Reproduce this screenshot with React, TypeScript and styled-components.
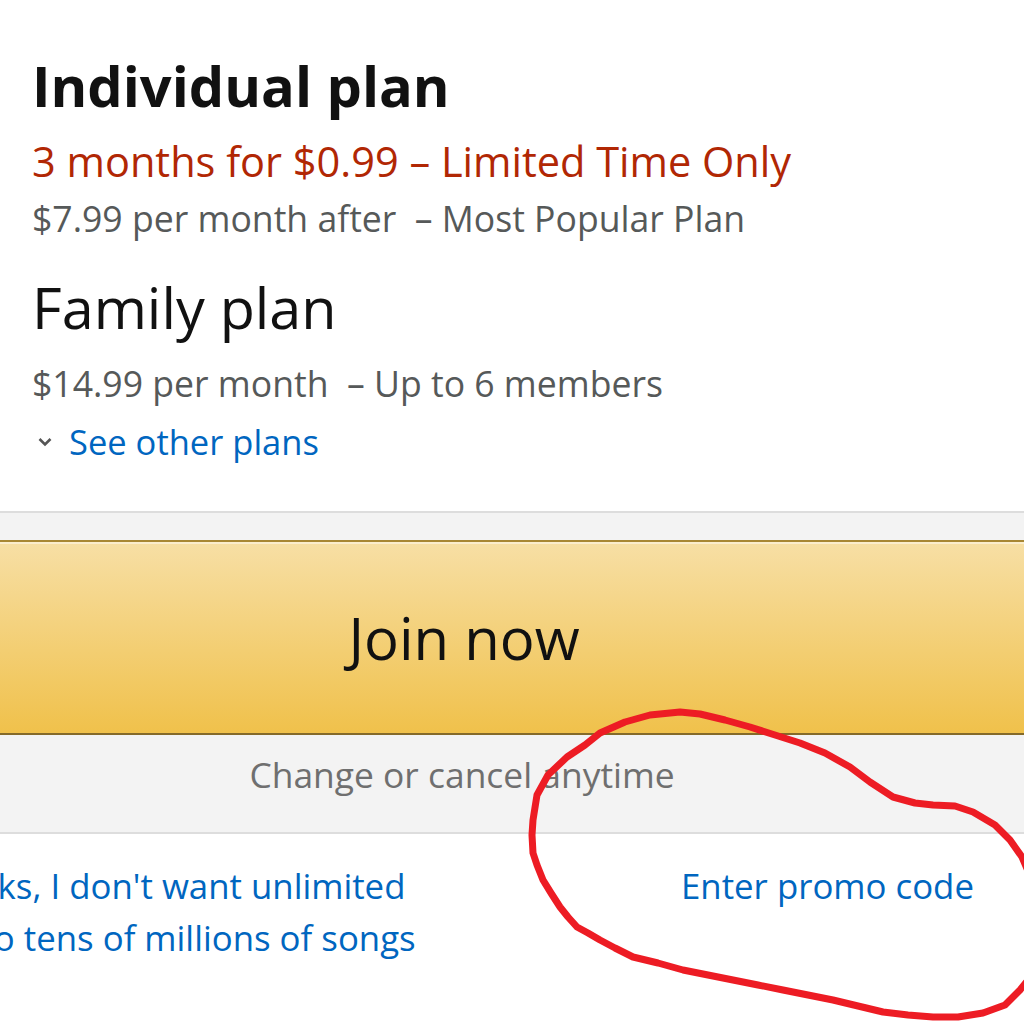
import React from "react";
import styled, { createGlobalStyle } from "styled-components";

const GlobalStyle = createGlobalStyle`
  html, body {
    margin: 0;
    padding: 0;
    background: #fff;
    overflow: hidden;
  }
  body {
    font-family: "Open Sans", "Noto Sans", Arial, sans-serif;
    color: #111;
  }
`;

// freehand loop drawn around the promo link
const loopPoints: [number, number][] = [
  [533, 820], [537, 795], [548, 775], [567, 757], [585, 745], [600, 733],
  [625, 722], [650, 715], [680, 712], [700, 714], [725, 720], [750, 727],
  [775, 735], [800, 743], [825, 753], [850, 767], [870, 782], [893, 797],
  [915, 803], [933, 805], [955, 806], [973, 812], [995, 825], [1010, 840],
  [1022, 857], [1032, 880], [1040, 930], [1032, 975], [1020, 990],
  [1005, 1005], [983, 1013], [958, 1017], [933, 1017], [908, 1015],
  [883, 1012], [858, 1006], [833, 1000], [808, 995], [783, 990], [758, 985],
  [733, 980], [708, 975], [683, 970], [658, 963], [633, 957], [615, 948],
  [600, 940], [588, 933], [577, 927], [568, 917], [560, 907], [551, 893],
  [543, 880], [537, 865], [533, 853], [532, 835], [533, 820],
];

const Page = styled.div`
  position: relative;
  width: 1024px;
  height: 1024px;
  overflow: hidden;
`;

const Plans = styled.section`
  padding: 51px 0 0 32px;
  height: 511px;
  box-sizing: border-box;
`;

const PlanTitle = styled.h2<{ $bold?: boolean; $gap?: number }>`
  margin: ${(p) => p.$gap ?? 0}px 0 0;
  font-size: ${(p) => (p.$bold ? "56px" : "57.5px")};
  font-weight: ${(p) => (p.$bold ? 700 : 400)};
  line-height: 68px;
  color: #111;
`;

const Offer = styled.div`
  margin-top: 17px;
  font-size: 41.5px;
  line-height: 50px;
  color: #b12704;
`;

const Detail = styled.div<{ $gap: number }>`
  margin-top: ${(p) => p.$gap}px;
  font-size: 35.6px;
  line-height: 44px;
  color: #565959;
`;

const Toggle = styled.a`
  display: flex;
  align-items: center;
  gap: 16px;
  margin-top: 15px;
  font-size: 34.5px;
  line-height: 44px;
  color: #0066c0;
  text-decoration: none;
  svg {
    width: 16px;
    height: 16px;
    margin-left: 5px;
  }
`;

const Band = styled.section`
  background: #f3f3f3;
  border-top: 2px solid #dddddd;
  border-bottom: 2px solid #dddddd;
  padding-top: 27px;
`;

const JoinButton = styled.button`
  display: flex;
  align-items: center;
  justify-content: center;
  box-sizing: border-box;
  width: calc(100% + 20px);
  margin: 0 -10px;
  height: 195px;
  padding: 0 96px 0 0;
  border: 2px solid #a88734;
  border-color: #a88734 #9c7e31 #846a29;
  background: linear-gradient(to bottom, #f7dfa5, #f0c14b);
  box-shadow: inset 0 2px 0 rgba(255, 255, 255, 0.45);
  font-family: inherit;
  font-size: 58px;
  color: #111;
`;

const Note = styled.div`
  box-sizing: border-box;
  height: 97px;
  padding: 17px 100px 0 0;
  text-align: center;
  font-size: 35.4px;
  line-height: 44px;
  color: #6f6f6f;
`;

const Links = styled.section`
  display: grid;
  grid-template-columns: 681px 1fr;
  padding-top: 26px;
`;

const TextLink = styled.a<{ $shift?: number }>`
  font-size: 34.8px;
  line-height: 52px;
  color: #0066c0;
  text-decoration: none;
  margin-left: ${(p) => p.$shift ?? 0}px;
  white-space: nowrap;
`;

const Scribble = styled.svg`
  position: absolute;
  inset: 0;
  pointer-events: none;
`;

const Chevron = () => (
  <svg viewBox="0 0 16 16">
    <path d="M2.5 5 L8 10.5 L13.5 5" fill="none" stroke="#555" strokeWidth="2.6" />
  </svg>
);

export default function App() {
  return (
    <Page>
      <GlobalStyle />
      <Plans>
        <PlanTitle $bold>Individual plan</PlanTitle>
        <Offer>3 months for $0.99 – Limited Time Only</Offer>
        <Detail $gap={10}>$7.99 per month after&nbsp; – Most Popular Plan</Detail>
        <PlanTitle $gap={33}>Family plan</PlanTitle>
        <Detail $gap={20}>$14.99 per month&nbsp; – Up to 6 members</Detail>
        <Toggle href="#">
          <Chevron />
          See other plans
        </Toggle>
      </Plans>
      <Band>
        <JoinButton>Join now</JoinButton>
        <Note>Change or cancel anytime</Note>
      </Band>
      <Links>
        <TextLink href="#" $shift={-133}>
          No thanks, I don't want unlimited
          <br />
          access to tens of millions of songs
        </TextLink>
        <TextLink href="#">Enter promo code</TextLink>
      </Links>
      <Scribble width="1024" height="1024" viewBox="0 0 1024 1024">
        <polyline
          points={loopPoints.map((p) => p.join(",")).join(" ")}
          fill="none"
          stroke="#ed1c24"
          strokeWidth="7"
          strokeLinejoin="round"
          strokeLinecap="round"
        />
      </Scribble>
    </Page>
  );
}
